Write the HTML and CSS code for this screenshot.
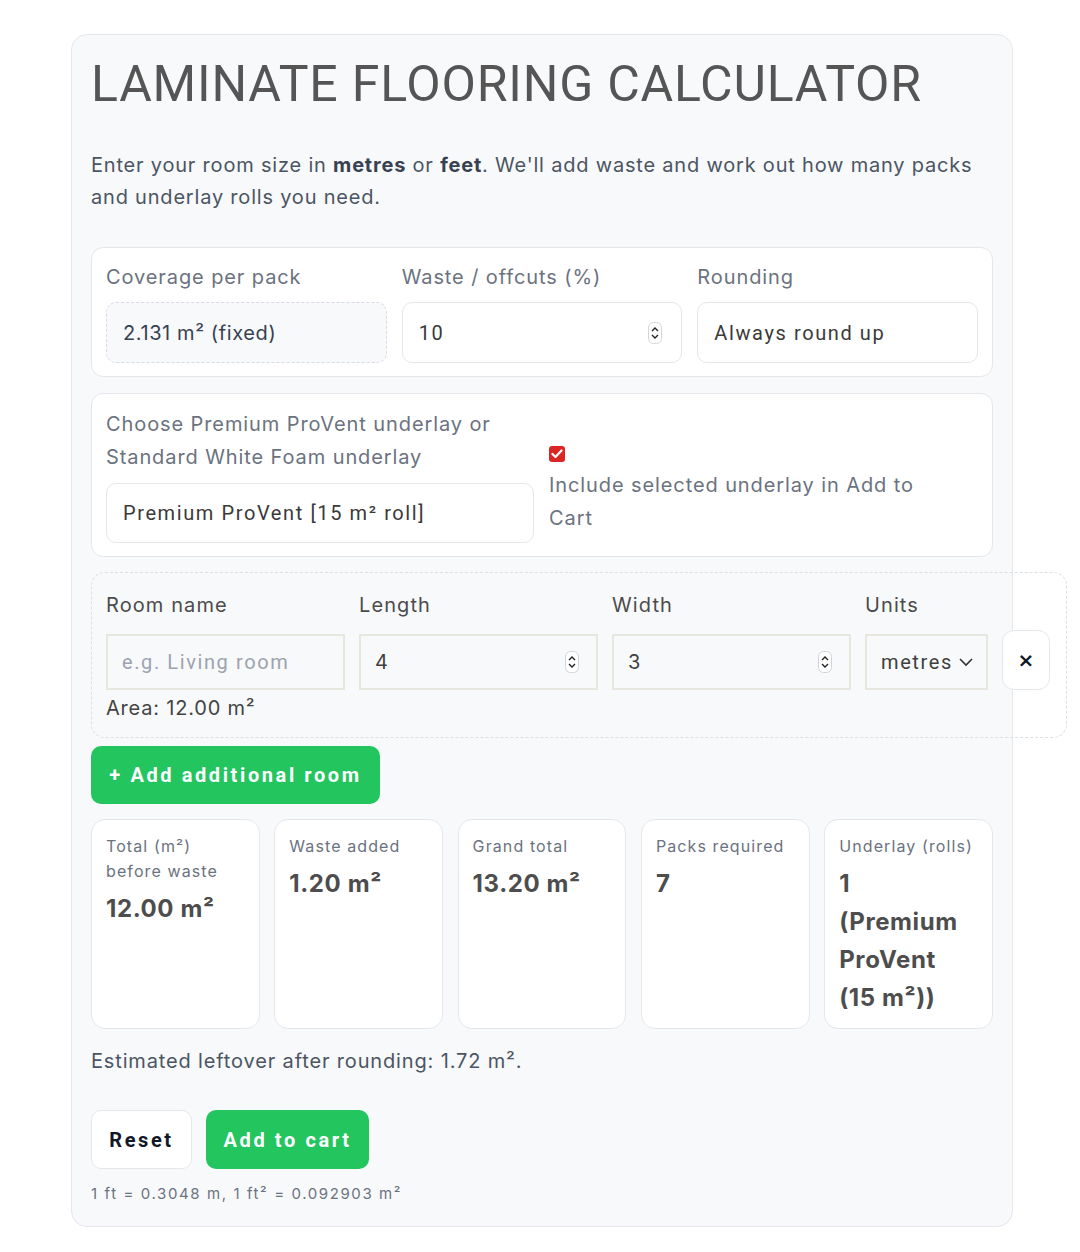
FILE: index.html
```html
<!DOCTYPE html>
<html lang="en">
<head>
<meta charset="utf-8">
<title>Laminate Flooring Calculator</title>
<link rel="stylesheet" href="styles.css">
</head>
<body>
<div class="page">
  <div class="calc">
    <h1 class="title">LAMINATE FLOORING CALCULATOR</h1>
    <p class="intro">Enter your room size in <strong>metres</strong> or <strong>feet</strong>. We'll add waste and work out how many packs and underlay rolls you need.</p>

    <div class="panel settings">
      <div class="field">
        <label class="lbl">Coverage per pack</label>
        <div class="box box-fixed">2.131 m² (fixed)</div>
      </div>
      <div class="field">
        <label class="lbl">Waste / offcuts (%)</label>
        <div class="box box-input sq">10
          <svg class="spin" width="14" height="22" viewBox="0 0 14 22"><rect x="0.5" y="0.5" width="13" height="21" rx="5" fill="#fff" stroke="#d1d5db"/><path d="M4 9 L7 6 L10 9" fill="none" stroke="#222" stroke-width="1.4"/><path d="M4 13 L7 16 L10 13" fill="none" stroke="#222" stroke-width="1.4"/></svg>
        </div>
      </div>
      <div class="field">
        <label class="lbl">Rounding</label>
        <div class="box box-input sq">Always round up</div>
      </div>
    </div>

    <div class="panel underlay">
      <div class="field">
        <label class="lbl lbl-tall">Choose Premium ProVent underlay or Standard White Foam underlay</label>
        <div class="box box-input sq">Premium ProVent [15 m² roll]</div>
      </div>
      <div class="check-col">
        <span class="checkbox"><svg width="12" height="10" viewBox="0 0 12 10"><path d="M1.5 5 L4.5 8 L10.5 1.5" fill="none" stroke="#fff" stroke-width="2.2" stroke-linecap="round" stroke-linejoin="round"/></svg></span>
        <span class="check-text">Include selected underlay in Add to Cart</span>
      </div>
    </div>

    <div class="room">
      <div class="room-grid">
        <div class="field">
          <label class="lbl lbl-dark">Room name</label>
          <div class="rbox sq placeholder">e.g. Living room</div>
        </div>
        <div class="field">
          <label class="lbl lbl-dark">Length</label>
          <div class="rbox">4
            <svg class="spin" width="14" height="22" viewBox="0 0 14 22"><rect x="0.5" y="0.5" width="13" height="21" rx="5" fill="#fff" stroke="#d1d5db"/><path d="M4 9 L7 6 L10 9" fill="none" stroke="#222" stroke-width="1.4"/><path d="M4 13 L7 16 L10 13" fill="none" stroke="#222" stroke-width="1.4"/></svg>
          </div>
        </div>
        <div class="field">
          <label class="lbl lbl-dark">Width</label>
          <div class="rbox">3
            <svg class="spin" width="14" height="22" viewBox="0 0 14 22"><rect x="0.5" y="0.5" width="13" height="21" rx="5" fill="#fff" stroke="#d1d5db"/><path d="M4 9 L7 6 L10 9" fill="none" stroke="#222" stroke-width="1.4"/><path d="M4 13 L7 16 L10 13" fill="none" stroke="#222" stroke-width="1.4"/></svg>
          </div>
        </div>
        <div class="field">
          <label class="lbl lbl-dark">Units</label>
          <div class="rbox sq units">metres
            <svg width="16" height="10" viewBox="0 0 16 10"><path d="M2 2 L8 8 L14 2" fill="none" stroke="#333" stroke-width="1.6"/></svg>
          </div>
        </div>
        <button class="remove" type="button">×</button>
      </div>
      <div class="area">Area: 12.00 m²</div>
    </div>

    <button class="btn btn-green btn-add" type="button">+ Add additional room</button>

    <div class="results">
      <div class="card"><div class="c-lbl">Total (m²) before waste</div><div class="c-val">12.00 m²</div></div>
      <div class="card"><div class="c-lbl">Waste added</div><div class="c-val">1.20 m²</div></div>
      <div class="card"><div class="c-lbl">Grand total</div><div class="c-val">13.20 m²</div></div>
      <div class="card"><div class="c-lbl">Packs required</div><div class="c-val">7</div></div>
      <div class="card"><div class="c-lbl">Underlay (rolls)</div><div class="c-val">1<br>(Premium ProVent (15 m²))</div></div>
    </div>

    <p class="leftover">Estimated leftover after rounding: 1.72 m².</p>

    <div class="actions">
      <button class="btn btn-white" type="button">Reset</button>
      <button class="btn btn-green" type="button">Add to cart</button>
    </div>
    <p class="note">1 ft = 0.3048 m, 1 ft² = 0.092903 m²</p>
  </div>
</div>
</body>
</html>
```

FILE: styles.css
```css
* { box-sizing: border-box; }
html, body { margin: 0; padding: 0; background: #fff; }
body { font-family: Inter, "Liberation Sans", sans-serif; color: #4b5563; }

.page { padding: 34px 0 26px 71px; }

.calc {
  width: 942px;
  background: #f8f9fb;
  border: 1px solid #e5e7eb;
  border-radius: 16px;
  padding: 19px 19px 21px 19px;
}

.sq { font-family: Roboto, "DejaVu Sans", sans-serif; letter-spacing: 1.6px; }

.title {
  margin: 0;
  font-family: Roboto, "DejaVu Sans", sans-serif;
  font-weight: 400;
  font-size: 50px;
  line-height: 60px;
  letter-spacing: 0.8px;
  white-space: nowrap;
  color: #555;
}

.intro {
  margin: 35px 0 34px;
  font-size: 20px;
  line-height: 32px;
  letter-spacing: 0.8px;
  color: #4b5563;
}
.intro strong { color: #374151; font-weight: 700; }

.panel {
  background: #fff;
  border: 1px solid #e5e7eb;
  border-radius: 12px;
  padding: 14px 14px 13px;
}

.field { display: flex; flex-direction: column; }

.lbl {
  font-size: 20px;
  line-height: 30px;
  letter-spacing: 0.9px;
  color: #6b7280;
  margin-bottom: 10px;
}

.settings {
  display: grid;
  grid-template-columns: repeat(3, 1fr);
  gap: 15px;
}

.box {
  height: 61px;
  border-radius: 10px;
  padding: 0 16px;
  display: flex;
  align-items: center;
  font-size: 20px;
  color: #374151;
}
.box-fixed {
  background: #f8f9fb;
  border: 1px dashed #d8dce2;
  letter-spacing: 0.6px;
}
.box-input {
  background: #fff;
  border: 1px solid #e5e7eb;
  color: #3a3a3a;
  justify-content: space-between;
}
.spin { flex: none; margin-right: 3px; }

.underlay {
  margin-top: 16px;
  display: grid;
  grid-template-columns: 428px 1fr;
  gap: 15px;
  padding-bottom: 13px;
}
.lbl-tall { line-height: 33px; margin-bottom: 9px; }
.underlay .box { height: 60px; }

.check-col {
  display: flex;
  flex-direction: column;
  align-items: flex-start;
  padding-top: 38px;
}
.checkbox {
  width: 16px; height: 16px;
  border-radius: 3px;
  background: #dc2626;
  display: flex; align-items: center; justify-content: center;
}
.check-text {
  max-width: 395px;
  margin-top: 7px;
  font-size: 20px;
  line-height: 33px;
  letter-spacing: 0.9px;
  color: #6b7280;
}

.room {
  margin-top: 15px;
  width: 976px;
  border: 1px dashed #dcdfe4;
  border-radius: 14px;
  padding: 17px 14px 16px;
}
.room-grid {
  display: grid;
  grid-template-columns: 239px 239px 239px 123px 48px;
  column-gap: 14px;
  align-items: end;
}
.lbl-dark { color: #4b4b4b; letter-spacing: 1.1px; margin-bottom: 14px; }
.rbox {
  height: 56px;
  border: 2px solid #e7e7e0;
  padding: 0 14px;
  display: flex;
  align-items: center;
  justify-content: space-between;
  font-size: 20px;
  color: #3f3f3f;
}
.placeholder { color: #9ca3af; }
.units { padding-right: 12px; }
.remove {
  width: 48px; height: 60px;
  background: #fff;
  border: 1px solid #e5e7eb;
  border-radius: 12px;
  font-family: "DejaVu Sans", sans-serif;
  font-weight: 700;
  font-size: 20px;
  color: #111827;
  padding: 0;
}
.area {
  margin-top: 5px;
  font-size: 20px;
  line-height: 26px;
  letter-spacing: 0.8px;
  color: #444;
}

.btn {
  height: 59px;
  border-radius: 10px;
  font-family: Roboto, "DejaVu Sans", sans-serif;
  font-weight: 700;
  font-size: 20px;
  letter-spacing: 2.6px;
  padding: 0 14px;
  cursor: pointer;
}
.btn-green { background: #22c55e; color: #fff; border: 0; }
.btn-white { background: #fff; color: #111827; border: 1px solid #e5e7eb; }
.btn-add { margin-top: 8px; height: 58px; width: 289px; }

.results {
  margin-top: 15px;
  display: grid;
  grid-template-columns: repeat(5, 1fr);
  gap: 14.5px;
}
.card {
  height: 210px;
  background: #fff;
  border: 1px solid #e5e7eb;
  border-radius: 14px;
  padding: 14px 14px;
}
.c-lbl {
  font-size: 16px;
  line-height: 25px;
  letter-spacing: 1.1px;
  color: #6b7280;
}
.c-val {
  margin-top: 6px;
  font-size: 24px;
  line-height: 38px;
  font-weight: 700;
  letter-spacing: 0.6px;
  color: #4d4d4d;
}

.leftover {
  margin: 19px 0 0;
  font-size: 20px;
  line-height: 26px;
  letter-spacing: 0.85px;
  color: #4b5563;
}

.actions {
  margin-top: 36px;
  display: flex;
  gap: 14px;
}
.actions .btn-white { width: 101px; }
.actions .btn-green { width: 163px; }

.note {
  margin: 14px 0 0;
  font-size: 15px;
  line-height: 22px;
  letter-spacing: 1.6px;
  color: #6b7280;
}
```
